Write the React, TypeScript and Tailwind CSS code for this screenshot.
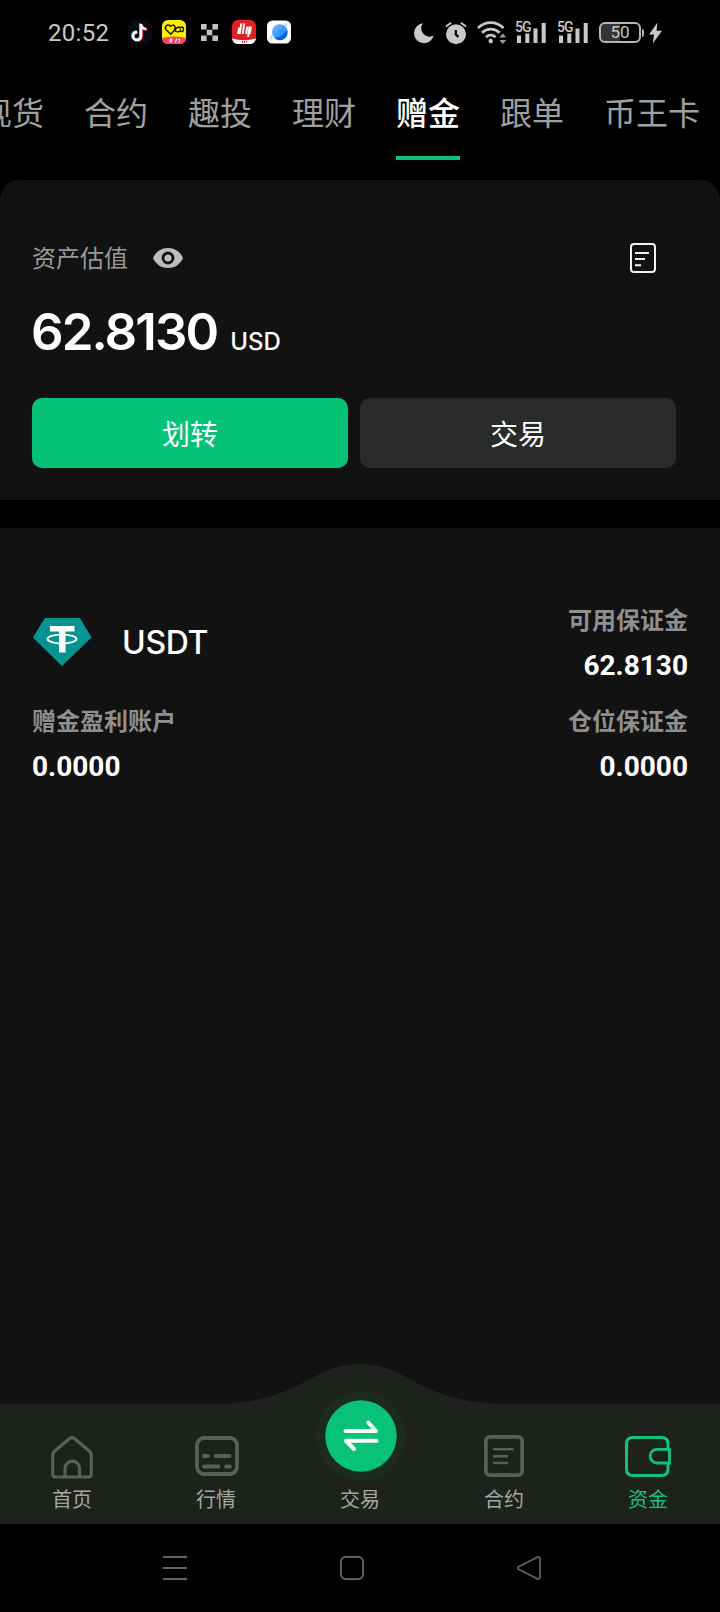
import type { ReactNode } from 'react'

const tabs = ['现货', '合约', '趣投', '理财', '赠金', '跟单', '币王卡']

function StatusBar() {
  return (
    <div className="flex h-16 shrink-0 items-center pl-12 text-[#c9c9c9]">
      <span className="w-20 pt-px font-[Roboto] text-2xl leading-none tracking-[0.3px]">20:52</span>

      {/* Notification icons */}
      <div className="flex items-center">
        <svg className="mr-2.5 h-6 w-6" viewBox="0 0 24 24">
          <rect width="24" height="24" rx="6" fill="#0b0a14" />
          <g fill="none" strokeWidth="2.4">
            <path d="M12.200 3.500v12a4 4 0 1 1-4-4M12.200 4c.4 2.800 2.200 4.300 5.300 4.600" stroke="#25d8d8" />
            <path d="M13.800 4.500v12a4 4 0 1 1-4-4M13.800 5c.4 2.800 2.200 4.300 5.300 4.600" stroke="#e8375c" />
            <path d="M13 4v12a4 4 0 1 1-4-4M13 4.500c.4 2.800 2.200 4.300 5.300 4.600" stroke="#fff" />
          </g>
        </svg>
        <svg className="mr-[15px] h-6 w-6" viewBox="0 0 24 24">
          <clipPath id="appYellow"><rect width="24" height="24" rx="6" /></clipPath>
          <g clipPath="url(#appYellow)">
            <rect width="24" height="24" fill="#fdf000" />
            <path d="M0 18Q12 15 24 18V24H0Z" fill="#f0466a" />
            <path d="M12.500 10.300Q11 12 8.800 14.300L4.300 10C1.800 7 5.600 3 8.700 6.400C11.500 3.200 14.300 6.500 12.500 10.300C14.300 12.400 17 12 18.500 10.800Q21 12.700 21.300 10.200Q21.600 9.300 21.300 8.200Q20.600 6.200 18.400 7.600C16.500 6.500 14.500 7.200 12.500 10.300Z" fill="none" stroke="#1a1800" strokeWidth="1.500" />
            <circle cx="18.300" cy="9.200" r=".8" fill="#1a1800" />
            <path d="M7.500 19.500q3-1.500 2.500.8t-3 .5M9 18.500v4M14.500 18.500l-1 4M16 19.500h2l-1 3" fill="none" stroke="#fff" strokeWidth="1" />
          </g>
        </svg>
        <svg className="mr-3.5 h-[17px] w-[17px]" viewBox="0 0 17 17" fill="#c2c2c2">
          <path d="M0 0h5.600v5.600H0zM11.400 0H17v5.600h-5.600zM5.700 5.700h5.600v5.600H5.700zM0 11.400h5.600V17H0zM11.400 11.400H17V17h-5.600z" />
        </svg>
        <svg className="mr-[11px] h-6 w-6" viewBox="0 0 24 24">
          <clipPath id="appRed"><rect width="24" height="24" rx="6" /></clipPath>
          <g clipPath="url(#appRed)">
            <rect width="24" height="24" fill="#e31f26" />
            <path d="M0 18.500Q12 22 24 18.500V24H0Z" fill="#fff" />
            <path d="M9.300 3.500 7.700 14M7.200 7.500 5.900 14M12.300 3.500l-1.600 10.500M15.300 6.500l-1.200 7.500M19 6.500l-1.400 7.500M17.500 6.500l-1.400 10.500" fill="none" stroke="#fff" strokeWidth="1.900" />
            <path d="M10.500 21v2M12.500 21v2M14.500 20.500v2" stroke="#e31f26" strokeWidth="1" />
          </g>
        </svg>
        <svg className="h-6 w-6" viewBox="0 0 24 24">
          <defs>
            <linearGradient id="planet" x1="0" y1="0" x2="1" y2="1">
              <stop offset="0" stopColor="#6fc0ff" />
              <stop offset="1" stopColor="#1474f0" />
            </linearGradient>
          </defs>
          <rect y=".5" width="24" height="23" rx="5.500" fill="#fff" />
          <path d="M4 20C1.500 17.500 9 12 20 4" stroke="#b8dcff" strokeWidth="2" fill="none" />
          <circle cx="12.700" cy="12" r="7.700" fill="url(#planet)" />
          <path d="M20 9.500C18 14 13 18 7.500 18A7.700 7.700 0 0 0 20 9.500Z" fill="#0b5fdc" />
        </svg>
      </div>

      {/* System indicators */}
      <div className="ml-[123px] flex items-center pt-px">
        <svg className="mr-[11px] h-[22px] w-5" viewBox="0 0 20 22" fill="currentColor">
          <path d="M9 1.200A10 10 0 1 0 19.700 13.500A8.300 8.300 0 0 1 9 1.200Z" />
        </svg>
        <svg className="mr-2.5 h-6 w-[22px]" viewBox="0 0 22 24">
          <circle cx="11" cy="13.200" r="10" fill="currentColor" />
          <path d="M1 5.500 6.200 1.700M21 5.500 15.800 1.700" stroke="currentColor" strokeWidth="2" />
          <path d="M10.800 9v4.600l2.600 2.200" fill="none" stroke="#000" strokeWidth="2.200" />
        </svg>
        <svg className="mr-2 h-6 w-[30px]" viewBox="0 0 30 24">
          <g fill="none" stroke="currentColor" strokeWidth="2.700">
            <path d="M1 7C8.500-.2 19-.2 26.500 7" />
            <path d="M5 11.700C10 7 17.500 7 22.500 11.700" />
            <path d="M9 16.200C11.800 13.500 15.700 13.500 18.500 16.200" />
          </g>
          <circle cx="13.700" cy="20" r="2.200" fill="currentColor" />
          <path d="M22.300 16.500 25.800 12.500 29.300 16.500ZM22.300 18.900 25.800 22.900 29.300 18.900Z" fill="#9a9a9a" />
        </svg>
        <Signal />
        <Signal />
        <div className="flex h-[21px] w-[42px] items-center justify-center rounded-[6px] border-2 border-[#b5b5b5] bg-linear-to-r from-[#343434] from-50% to-black to-50% font-[Roboto] text-[17px] leading-none">
          50
        </div>
        <div className="ml-[1px] h-2 w-[2px] rounded-r bg-[#b5b5b5]" />
        <svg className="ml-[5px] h-[22px] w-[13px]" viewBox="0 0 13 22" fill="currentColor">
          <path d="M8.500 .5 0 12.500H5L3.800 21.500 13 8.800H7.500Z" />
        </svg>
      </div>
    </div>
  )
}

function Signal() {
  return (
    <div className="relative mr-[11px] h-6 w-[31px]">
      <svg className="h-6 w-[31px]" viewBox="0 0 31 24" fill="currentColor">
        <path d="M2 14.500h4v7.500H2zM10.300 12.500h4V22h-4zM18.500 7.500h4V22h-4zM26.700 2h4v20h-4z" />
      </svg>
      <span className="absolute left-0 top-0 bg-black font-[Roboto] text-[14px] font-medium leading-[12px] tracking-[-1px]">5G</span>
    </div>
  )
}

function NavItem({ label, active, children }: { label: string; active?: boolean; children: ReactNode }) {
  return (
    <div className={active ? 'flex w-36 flex-col items-center pt-[30px] text-[#11c47a]' : 'flex w-36 flex-col items-center pt-[30px] text-[#a3a7a3]'}>
      <div className="flex h-[46px] items-start justify-center">{children}</div>
      <span className="mt-[7px] text-xl leading-6">{label}</span>
    </div>
  )
}

function Stat({ label, value, right }: { label: string; value: string; right?: boolean }) {
  return (
    <div className={right ? 'flex flex-col items-end' : 'flex flex-col items-start'}>
      <span className="text-2xl font-bold leading-8 text-[#8f8f8f]">{label}</span>
      <span className="mt-[15px] font-[Roboto] text-[28px] font-bold leading-8 text-white">{value}</span>
    </div>
  )
}

export default function App() {
  return (
    <div className="flex h-[1612px] w-[720px] flex-col overflow-hidden bg-black font-['Noto_Sans_CJK_SC',sans-serif] text-white">
      <StatusBar />

      {/* Account tabs, scrolled so that the first one is cut off */}
      <div className="flex h-[116px] shrink-0 overflow-hidden">
        <div className="-ml-10 flex">
          {tabs.map((tab) => (
            <div key={tab} className="flex w-max shrink-0 flex-col px-5">
              <span className={tab === '赠金' ? 'mt-[23px] text-[32px] font-medium leading-[48px]' : 'mt-[23px] text-[32px] leading-[48px] text-[#a0a0a0]'}>
                {tab}
              </span>
              {tab === '赠金' && <div className="mt-[21px] h-1 bg-[#07c278]" />}
            </div>
          ))}
        </div>
      </div>

      {/* Balance card */}
      <section className="h-80 shrink-0 rounded-t-[20px] bg-[#121212] pl-8 pr-11 pt-[60px]">
        <div className="flex h-9 items-center">
          <span className="-mt-[3px] text-2xl leading-9 text-[#999]">资产估值</span>
          <svg className="ml-[25px] h-5 w-[30px]" viewBox="0 0 30 20">
            <path d="M15 0C22 0 27.500 4 30 10C27.500 16 22 20 15 20S2.500 16 0 10C2.500 4 8 0 15 0Z" fill="#bdbdbd" />
            <circle cx="15" cy="10" r="5" fill="none" stroke="#121212" strokeWidth="2.800" />
          </svg>
          <svg className="ml-auto mr-5 h-[30px] w-[26px]" viewBox="0 0 26 30" fill="none" stroke="#f2f2f2" strokeWidth="2">
            <rect x="1" y="1" width="24" height="28" rx="3" />
            <path d="M5 10h14M5 16h10M5 22.300h6" />
          </svg>
        </div>
        <div className="mt-[26px] flex h-[60px] items-baseline font-[Inter]">
          <span className="-ml-px text-[51px] font-semibold leading-[60px] tracking-[-1.9px]">62.8130</span>
          <span className="ml-[13px] text-2xl font-medium">USD</span>
        </div>
        <div className="mt-9 flex gap-3 text-[28px]">
          <button className="h-[70px] flex-1 rounded-[10px] bg-[#05c277]">划转</button>
          <button className="h-[70px] flex-1 rounded-[10px] bg-[#292a2a]">交易</button>
        </div>
      </section>

      {/* Asset list */}
      <section className="mt-7 flex flex-1 flex-col gap-[22px] bg-[#121212] px-8 pt-[75px]">
        <div className="flex justify-between">
          <div className="flex h-[77px] items-center">
            <svg className="h-12 w-[60px]" viewBox="0 0 60 48">
              <path d="M13 0H48L59.500 19.500 30 48 .8 19.500Z" fill="#089393" />
              <path d="M18 8H42.500V13.500H33.500V34.500H27V13.500H18Z" fill="#fff" />
              <ellipse cx="30" cy="21" rx="14.500" ry="4.300" fill="none" stroke="#fff" strokeWidth="1.800" />
            </svg>
            <span className="ml-[30px] pt-0.5 font-[Inter] text-[32px] font-medium leading-10 tracking-[-0.3px]">USDT</span>
          </div>
          <Stat label="可用保证金" value="62.8130" right />
        </div>
        <div className="flex justify-between">
          <Stat label="赠金盈利账户" value="0.0000" />
          <Stat label="仓位保证金" value="0.0000" right />
        </div>
      </section>

      {/* Bottom navigation with the raised middle */}
      <nav className="relative flex h-[120px] shrink-0 bg-[#1d221d]">
        <svg className="absolute -top-10 left-0 h-[41px] w-[720px]" viewBox="0 0 720 41">
          <path d="M210 41V40C304 40 308 0 360 0S416 40 510 40V41Z" fill="#1d221d" />
        </svg>
        <NavItem label="首页">
          <svg className="mt-[2px] h-[43px] w-[42px]" viewBox="0 0 42 43" fill="none" stroke="#566259" strokeWidth="3.200" strokeLinejoin="round">
            <path d="M18.300 2.700Q21 .7 23.700 2.700L38.800 15.500Q40.300 17 40.300 19V38Q40.300 41 37.300 41H4.700Q1.700 41 1.700 38V19Q1.700 17 3.200 15.500Z" />
            <path d="M14 40V32.500A7.300 7.300 0 0 1 28.600 32.500V40" />
          </svg>
        </NavItem>
        <NavItem label="行情">
          <svg className="ml-[2px] mt-[2px] h-10 w-11" viewBox="0 0 44 40" fill="none" stroke="#566259" strokeWidth="3.800" strokeLinecap="round">
            <rect x="2" y="2" width="40" height="36" rx="7" />
            <path d="M9 20h4M20.500 20H34.500M9 30.500H23.500M31 30.500h4" />
          </svg>
        </NavItem>
        <NavItem label="交易">
          <div className="relative -mt-[43px] ml-[2px] flex h-[90px] w-[90px] items-center justify-center rounded-full bg-[#1c2b20]">
            <svg className="h-[72px] w-[72px]" viewBox="0 0 72 72">
              <circle cx="36" cy="36" r="35.700" fill="#07c277" />
              <path d="M20.500 31H51L43.200 22.500M51.500 40.800H21L29 49" fill="none" stroke="#fff" strokeWidth="4" strokeLinecap="round" strokeLinejoin="round" />
            </svg>
          </div>
        </NavItem>
        <NavItem label="合约">
          <svg className="mt-[1px] h-[42px] w-10" viewBox="0 0 40 42" fill="none" stroke="#566259" strokeWidth="3.600">
            <rect x="1.900" y="1.900" width="36.200" height="38.200" rx="4" />
            <path d="M10 14.300H28.500M10 21.200H23M10 28H23" strokeWidth="2.400" strokeLinecap="round" />
          </svg>
        </NavItem>
        <NavItem label="资金" active>
          <svg className="mt-[2px] h-[41px] w-[46px]" viewBox="0 0 46 41" fill="none" stroke="#11c47a" strokeWidth="3">
            <path d="M43 12V8Q43 1.500 36.500 1.500H8Q1.500 1.500 1.500 8V33Q1.500 39.500 8 39.500H36.500Q43 39.500 43 33V27" />
            <path d="M44.500 13.300V27H32A6.850 6.850 0 0 1 32 13.300Z" strokeWidth="2.800" />
          </svg>
        </NavItem>
      </nav>

      {/* Android system buttons */}
      <div className="flex h-[88px] shrink-0 items-center justify-center gap-[153px] pr-[17px]">
        <svg className="h-[26px] w-6" viewBox="0 0 24 26" stroke="#646464" strokeWidth="2">
          <path d="M0 2h24M0 13h24M0 24h24" />
        </svg>
        <svg className="h-6 w-6" viewBox="0 0 24 24" fill="none" stroke="#686868" strokeWidth="1.800">
          <rect x=".9" y=".9" width="22.200" height="22.200" rx="5" />
        </svg>
        <svg className="h-6 w-6" viewBox="0 0 24 24" fill="none" stroke="#606060" strokeWidth="1.800">
          <path d="M20.500 1.200Q23 .3 23 3V21Q23 23.700 20.500 22.800L2 13.500Q-.2 12 2 10.500Z" />
        </svg>
      </div>
    </div>
  )
}
